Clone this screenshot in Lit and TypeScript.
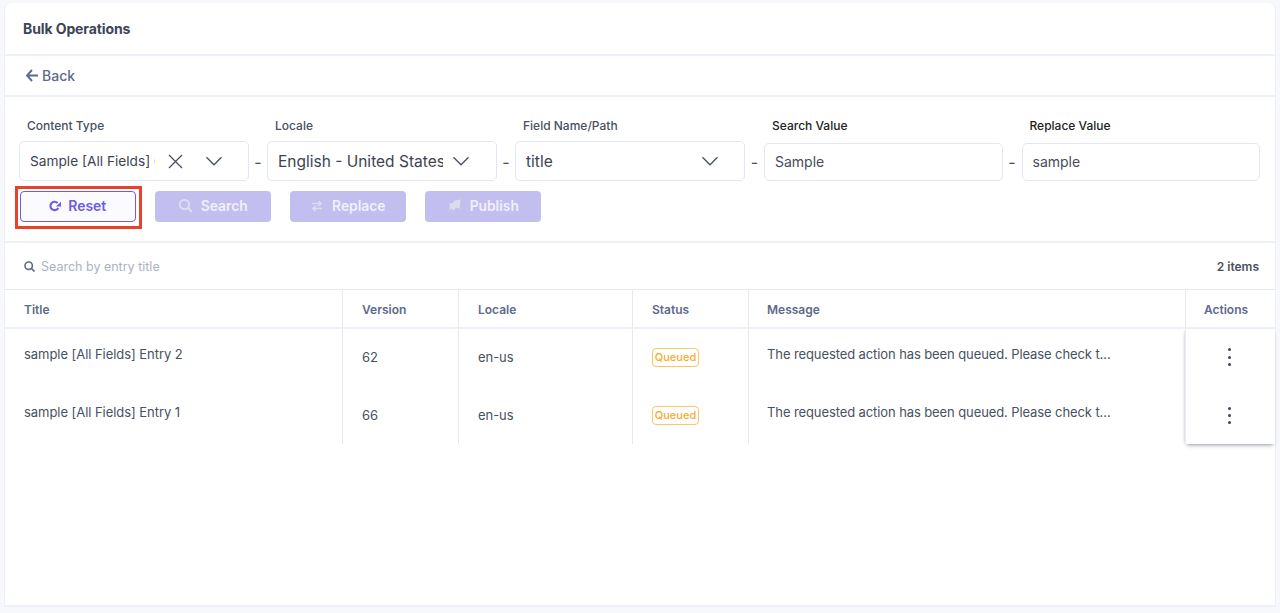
import { LitElement, html, css, svg } from "lit";
import { customElement } from "lit/decorators.js";

const chevron = html`<svg class="chev" width="18" height="10" viewBox="0 0 18 10" fill="none" stroke="#475161" stroke-width="1.3"><path d="M1.5 1.2 9 8.8l7.5-7.6"/></svg>`;
const cross = html`<svg class="x" width="15" height="15" viewBox="0 0 15 15" fill="none" stroke="#475161" stroke-width="1.3"><path d="M1 1l13 13M14 1 1 14"/></svg>`;
const reset = svg`<path d="M8.600 3A4.200 4.200 0 1 0 9.300 8" fill="none" stroke="#6c5ce7" stroke-width="2.100"/><path d="M7 6.400h5V1.800z" fill="#6c5ce7"/>`;
const mag = svg`<circle cx="6.5" cy="6.5" r="4.7" fill="none" stroke="#dfe0ee" stroke-width="1.8"/><path d="m10 10 3.800 3.800" stroke="#dfe0ee" stroke-width="1.8"/>`;
const swap = svg`<path d="M2 4.500h9M8.500 2.200l2.500 2.300-2.500 2.300M12 9.500H3M5.500 7.200 3 9.500l2.500 2.300" fill="none" stroke="#dcdcec" stroke-width="1.700"/>`;
const rocket = svg`<path d="M13.500 1.500 12.700 10.800 8.800 9.500 7 12.500 3.800 10.200 1.500 13.500 3 8.500 2 5.500 5.500 5.300 7.500 2.500z" fill="#dcdcec"/>`;

const rows = [
  { title: "sample [All Fields] Entry 2", version: "62" },
  { title: "sample [All Fields] Entry 1", version: "66" },
];
const msg = "The requested action has been queued. Please check the status in the bulk operations log.";

@customElement("app-root")
export class AppRoot extends LitElement {
  static styles = css`
    :host {
      display: block;
      height: 613px;
      box-sizing: border-box;
      background: #f7f8fc;
      padding: 3px 4px 6px 4px;
      font-family: Inter, "Liberation Sans", sans-serif;
      color: #475161;
      overflow: hidden;
    }
    * { box-sizing: border-box; }
    .card {
      height: 604px;
      background: #fff;
      border-radius: 8px 8px 0 0;
      border: 1px solid #edeff7;
      border-top: 0;
      border-bottom-width: 2px;
      display: flex;
      flex-direction: column;
    }
    .head {
      height: 53px;
      padding: 0 0 0 18px;
      display: flex;
      align-items: center;
      font-size: 14px;
      font-weight: 700;
      color: #3c4557;
      letter-spacing: -0.1px;
      border-bottom: 2px solid #eef0f7;
    }
    .back {
      height: 41px;
      padding: 0 0 0 21px;
      display: flex;
      align-items: center;
      gap: 4px;
      font-size: 14px;
      font-weight: 500;
      color: #5d6a8b;
      border-bottom: 2px solid #eef0f7;
    }
    .form {
      height: 146px;
      padding: 21px 15px 0 14px;
      border-bottom: 2px solid #eef0f7;
    }
    .fields { display: flex; align-items: flex-start; }
    .field { flex: 0 0 230px; }
    .field.wide { flex: 1 1 0; }
    .lab {
      display: block;
      height: 23px;
      padding-left: 8px;
      font-size: 12px;
      line-height: 16px;
      font-weight: 500;
      color: #475161;
    }
    .field.wide .lab { color: #222; height: 25px; }
    .box {
      height: 40px;
      border: 1px solid #e4e7f3;
      border-radius: 5px;
      display: flex;
      align-items: center;
      padding-left: 10px;
      font-size: 15.500px;
      color: #3d4450;
      background: #fff;
    }
    .box.sm { font-size: 13.700px; }
    .field.wide .box { height: 38px; padding: 0 0 2px 10px; font-size: 14px; color: #474d59; }
    .val { overflow: hidden; white-space: nowrap; flex: none; }
    .ic { display: flex; }
    .dash {
      flex: 0 0 18px;
      text-align: center;
      padding-top: 33px;
      font-size: 16px;
      line-height: 22px;
      color: #475161;
    }
    .dash.w { flex-basis: 19px; }
    .actions { display: flex; gap: 19.500px; margin: 10px 0 0 1px; }
    .btn {
      position: relative;
      width: 115.500px;
      height: 30.500px;
      padding-bottom: 1px;
      border-radius: 4px;
      display: flex;
      align-items: center;
      justify-content: center;
      gap: 8px;
      font-size: 13.800px;
      font-weight: 600;
      color: #f1f0fb;
      background: #c3bef0;
    }
    .btn.on {
      background: #fbfaff;
      color: #6c5ce7;
      border: 1px solid #6c5ce7;
      font-size: 14px;
      gap: 7px;
    }
    .mark {
      position: absolute;
      left: -6px;
      top: -6px;
      width: 127px;
      height: 43px;
      border: 3px solid #e8432a;
    }
    .bar {
      height: 47px;
      display: flex;
      align-items: center;
      padding: 0 16px 0 19px;
      font-size: 12.500px;
      border-bottom: 1px solid #e6e9f3;
    }
    .ph { flex: 1; color: #aab2c9; margin-left: 6px; }
    .count { font-weight: 600; font-size: 12px; color: #475161; }
    .table {
      display: grid;
      grid-template-columns: 338px 116px 174px 116px 437px 1fr;
      grid-template-rows: 39px 58px 57px;
    }
    .th, .td { border-right: 1px solid #e6e9f3; padding-left: 19px; font-size: 13px; }
    .th {
      display: flex;
      align-items: center;
      padding-top: 1px;
      font-size: 12px;
      font-weight: 600;
      color: #5d6a8b;
      border-bottom: 2px solid #eef0f7;
    }
    .td { color: #475161; letter-spacing: -0.05px; white-space: nowrap; display: flex; align-items: center; padding-bottom: 1px; }
    .td.f { padding-bottom: 2px; }
    .td.top { align-items: flex-start; padding: 17px 0 0 19px; }
    .td.msg { overflow: hidden; padding-left: 18px; letter-spacing: -0.1px; }
    .msgt { display: block; width: 345px; overflow: hidden; text-overflow: ellipsis; white-space: nowrap; }
    .th.m { padding-left: 18px; }
    .badge {
      height: 19px;
      width: 47px;
      display: flex;
      align-items: center;
      justify-content: center;
      font-size: 11px;
      letter-spacing: 0;
      font-weight: 500;
      color: #f5ac2e;
      border: 1.300px solid #f8c662;
      border-radius: 4px;
    }
    .th.act {
      justify-content: center;
      padding: 1px 9px 0 0;
      border-right: 0;
      border-left: 1px solid #e6e9f3;
      margin-left: -1px;
      background: #fff;
    }
    .actcol {
      grid-column: 6;
      grid-row: 2 / 4;
      margin-left: -1px;
      background: #fff;
      display: grid;
      grid-template-rows: 58px 57px;
      box-shadow: 0 3px 4px -2px rgba(60,70,90,.55), -2px 0 3px -2px rgba(60,70,90,.25);
    }
    .kcell { display: flex; align-items: center; justify-content: center; padding-right: 1px; }
    .kcell.f { padding-bottom: 2px; }
    .kebab { display: flex; flex-direction: column; gap: 4.300px; }
    .kebab i { display: block; width: 3px; height: 3px; border-radius: 50%; background: #3d4658; }
  `;

  render() {
    return html`<div class="card">
      <div class="head">Bulk Operations</div>
      <div class="back">
        <svg width="12" height="13" viewBox="0 0 12 13" fill="none" stroke="#5d6a8b" stroke-width="1.900"><path d="M6 1 1 6.500l5 5.500M1.200 6.500H12"/></svg>
        <span>Back</span>
      </div>
      <div class="form">
        <div class="fields">
          <div class="field"><span class="lab">Content Type</span>
            <div class="box sm">
              <span class="val" style="width:125px">Sample [All Fields] Content</span>
              <span class="ic" style="margin-left:13px">${cross}</span>
              <span class="ic" style="margin-left:22px">${chevron}</span>
            </div>
          </div>
          <div class="dash">-</div>
          <div class="field"><span class="lab">Locale</span>
            <div class="box">
              <span class="val" style="width:165px">English - United States</span>
              <span class="ic" style="margin-left:9px">${chevron}</span>
            </div>
          </div>
          <div class="dash">-</div>
          <div class="field"><span class="lab">Field Name/Path</span>
            <div class="box">
              <span class="val" style="width:175px">title</span>
              <span class="ic">${chevron}</span>
            </div>
          </div>
          <div class="dash w">-</div>
          <div class="field wide"><span class="lab">Search Value</span><div class="box">Sample</div></div>
          <div class="dash w">-</div>
          <div class="field wide"><span class="lab">Replace Value</span><div class="box">sample</div></div>
        </div>
        <div class="actions">
          <div class="btn on">
            <svg width="12" height="12" viewBox="0 0 12 12">${reset}</svg>Reset
            <div class="mark"></div>
          </div>
          <div class="btn"><svg width="15" height="15" viewBox="0 0 15 15">${mag}</svg>Search</div>
          <div class="btn"><svg width="14" height="14" viewBox="0 0 14 14">${swap}</svg>Replace</div>
          <div class="btn"><svg width="15" height="15" viewBox="0 0 15 15">${rocket}</svg>Publish</div>
        </div>
      </div>
      <div class="bar">
        <svg width="11" height="11" viewBox="0 0 11 11" fill="none" stroke="#5d6a8b" stroke-width="1.600"><circle cx="4.700" cy="4.700" r="3.700"/><path d="m7.500 7.500 3 3"/></svg>
        <span class="ph">Search by entry title</span>
        <span class="count">2 items</span>
      </div>
      <div class="table">
        <div class="th">Title</div><div class="th">Version</div><div class="th">Locale</div>
        <div class="th">Status</div><div class="th m">Message</div><div class="th act">Actions</div>
        <div class="actcol">
          <div class="kcell f"><div class="kebab"><i></i><i></i><i></i></div></div>
          <div class="kcell"><div class="kebab"><i></i><i></i><i></i></div></div>
        </div>
        ${rows.map((r, i) => html`
          <div class="td top">${r.title}</div>
          <div class="td ${i === 0 ? "f" : ""}">${r.version}</div>
          <div class="td ${i === 0 ? "f" : ""}">en-us</div>
          <div class="td ${i === 0 ? "f" : ""}"><span class="badge">Queued</span></div>
          <div class="td top msg"><span class="msgt">${msg}</span></div>
        `)}
      </div>
    </div>`;
  }
}
